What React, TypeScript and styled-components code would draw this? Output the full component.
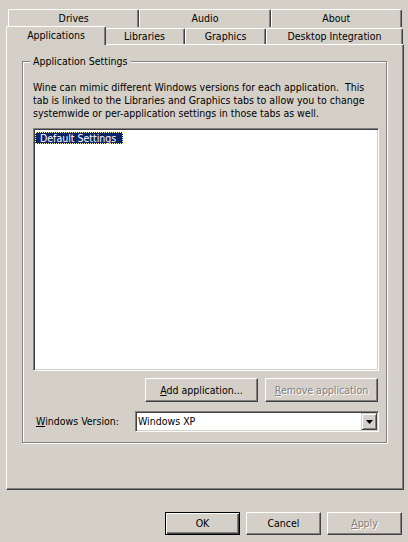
import React from "react";
import styled, { createGlobalStyle, css } from "styled-components";

const Global = createGlobalStyle`
  html, body { margin: 0; padding: 0; background: #d4d0c8; }
  body {
    font-family: "DejaVu Sans Condensed", "DejaVu Sans", sans-serif;
    font-size: 10.5px;
    line-height: 13px;
    color: #000;
  }
`;

const Window = styled.div`
  box-sizing: border-box;
  width: 408px;
  height: 542px;
  background: #d4d0c8;
  padding: 9px 4px 0 6px;
  display: flex;
  flex-direction: column;
`;

const TabControl = styled.div`
  width: 398px;
  display: flex;
  flex-direction: column;
`;

const TabRow = styled.div<{ $h: number; $pr: number }>`
  display: flex;
  height: ${(p) => p.$h}px;
  padding: 0 ${(p) => p.$pr}px 0 2px;
`;

const Tab = styled.div<{ $w?: number; $kind: "back" | "front" | "active" }>`
  box-sizing: border-box;
  flex: ${(p) => (p.$w ? `0 0 ${p.$w}px` : "1 1 0")};
  display: flex;
  align-items: center;
  justify-content: center;
  white-space: nowrap;
  background: #d4d0c8;
  border-top: 1px solid #fff;
  border-left: 1px solid #fff;
  border-right: 1px solid #404040;
  border-radius: 2px 2px 0 0;
  box-shadow: inset -1px 0 0 #808080;
  ${(p) =>
    p.$kind === "back" &&
    css`
      height: 18px;
      padding-bottom: 1px;
    `}
  ${(p) =>
    p.$kind === "front" &&
    css`
      height: 16px;
      margin-top: 1px;
    `}
  ${(p) =>
    p.$kind === "active" &&
    css`
      position: relative;
      z-index: 1;
      height: 19px;
      margin: -1px -2px 0;
      padding-bottom: 2px;
    `}
`;

const Panel = styled.div`
  box-sizing: border-box;
  height: 446px;
  border-top: 1px solid #fff;
  border-left: 1px solid #fff;
  border-right: 1px solid #404040;
  border-bottom: 1px solid #404040;
  box-shadow: inset -1px -1px 0 #808080;
  padding: 16px 0 0 15px;
`;

const GroupBox = styled.div`
  box-sizing: border-box;
  width: 365px;
  border: 1px solid #808080;
  box-shadow: inset 1px 1px 0 #fff, 1px 1px 0 #fff;
  padding: 0 7px 10px 10px;
  display: flex;
  flex-direction: column;
`;

const Legend = styled.div`
  align-self: flex-start;
  margin: -7px 0 0 -3px;
  padding: 0 3px;
  background: #d4d0c8;
`;

const Description = styled.div`
  margin-top: 13px;
  white-space: pre;
`;

const sunken = css`
  box-sizing: border-box;
  border: 1px solid;
  border-color: #808080 #fff #fff #808080;
  box-shadow: inset 1px 1px 0 #404040, inset -1px -1px 0 #d4d0c8;
  background: #fff;
`;

const ListBox = styled.div`
  ${sunken};
  margin-top: 8px;
  height: 243px;
  padding: 1px;
  display: flex;
  flex-direction: column;
`;

const ListItem = styled.div<{ $selected?: boolean }>`
  align-self: flex-start;
  margin-top: 2px;
  height: 12px;
  line-height: 12px;
  padding: 0 7px 0 5px;
  white-space: nowrap;
  ${(p) =>
    p.$selected &&
    css`
      background: #0a246a;
      color: #fff;
      outline: 1px dotted #f4f0b0;
      outline-offset: -1px;
    `}
`;

const ButtonRow = styled.div`
  margin-top: 7px;
  display: flex;
  justify-content: flex-end;
  gap: 7px;
  padding-right: 1px;
`;

const Button = styled.button<{ $w: number; $h: number; $default?: boolean }>`
  box-sizing: border-box;
  width: ${(p) => p.$w}px;
  height: ${(p) => p.$h}px;
  padding: 0;
  margin: 0;
  font: inherit;
  line-height: 13px;
  color: #000;
  background: #d4d0c8;
  border: 1px solid;
  border-color: #fff #404040 #404040 #fff;
  box-shadow: inset -1px -1px 0 #808080, inset 1px 1px 0 #d4d0c8;
  &:disabled {
    color: #808080;
    text-shadow: 1px 1px 0 #fff;
  }
  ${(p) =>
    p.$default &&
    css`
      border-color: #000;
      box-shadow: inset 1px 1px 0 #fff, inset -1px -1px 0 #404040,
        inset -2px -2px 0 #808080;
    `}
`;

const Key = styled.span`
  text-decoration: underline;
  text-underline-offset: 1px;
`;

const ComboRow = styled.div`
  margin-top: 9px;
  display: flex;
  align-items: center;
`;

const Label = styled.div`
  box-sizing: border-box;
  width: 102px;
  padding-left: 3px;
  white-space: nowrap;
`;

const Combo = styled.div`
  ${sunken};
  flex: 1;
  height: 21px;
  padding: 1px;
  display: flex;
  align-items: stretch;
`;

const ComboText = styled.div`
  flex: 1;
  display: flex;
  align-items: center;
  padding-left: 1px;
`;

const DropButton = styled.div`
  box-sizing: border-box;
  width: 16px;
  border: 1px solid;
  border-color: #d4d0c8 #404040 #404040 #d4d0c8;
  box-shadow: inset 1px 1px 0 #fff, inset -1px -1px 0 #808080;
  background: #d4d0c8;
  display: flex;
  align-items: center;
  justify-content: center;
`;

const Footer = styled.div`
  margin-top: 22px;
  display: flex;
  justify-content: flex-end;
  gap: 6px;
  padding-right: 2px;
`;

const desc =
  "Wine can mimic different Windows versions for each application.  This\n" +
  "tab is linked to the Libraries and Graphics tabs to allow you to change\n" +
  "systemwide or per-application settings in those tabs as well.";

export default function App() {
  return (
    <>
      <Global />
      <Window>
        <TabControl>
          <TabRow $h={18} $pr={2}>
            <Tab $kind="back">Drives</Tab>
            <Tab $kind="back">Audio</Tab>
            <Tab $kind="back">About</Tab>
          </TabRow>
          <TabRow $h={17} $pr={1}>
            <Tab $kind="active" $w={100}>Applications</Tab>
            <Tab $kind="front" $w={81}>Libraries</Tab>
            <Tab $kind="front" $w={81}>Graphics</Tab>
            <Tab $kind="front" $w={137}>Desktop Integration</Tab>
          </TabRow>
          <Panel>
            <GroupBox>
              <Legend>Application Settings</Legend>
              <Description>{desc}</Description>
              <ListBox>
                <ListItem $selected>Default Settings</ListItem>
              </ListBox>
              <ButtonRow>
                <Button $w={113} $h={24}>
                  <Key>A</Key>dd application...
                </Button>
                <Button $w={113} $h={24} disabled>
                  <Key>R</Key>emove application
                </Button>
              </ButtonRow>
              <ComboRow>
                <Label>
                  <Key>W</Key>indows Version:
                </Label>
                <Combo>
                  <ComboText>Windows XP</ComboText>
                  <DropButton>
                    <svg width="7" height="4" viewBox="0 0 7 4">
                      <polygon points="0,0 7,0 3.5,4" fill="#000" />
                    </svg>
                  </DropButton>
                </Combo>
              </ComboRow>
            </GroupBox>
          </Panel>
        </TabControl>
        <Footer>
          <Button $w={75} $h={23} $default>
            OK
          </Button>
          <Button $w={75} $h={23}>
            Cancel
          </Button>
          <Button $w={75} $h={23} disabled>
            <Key>A</Key>pply
          </Button>
        </Footer>
      </Window>
    </>
  );
}
